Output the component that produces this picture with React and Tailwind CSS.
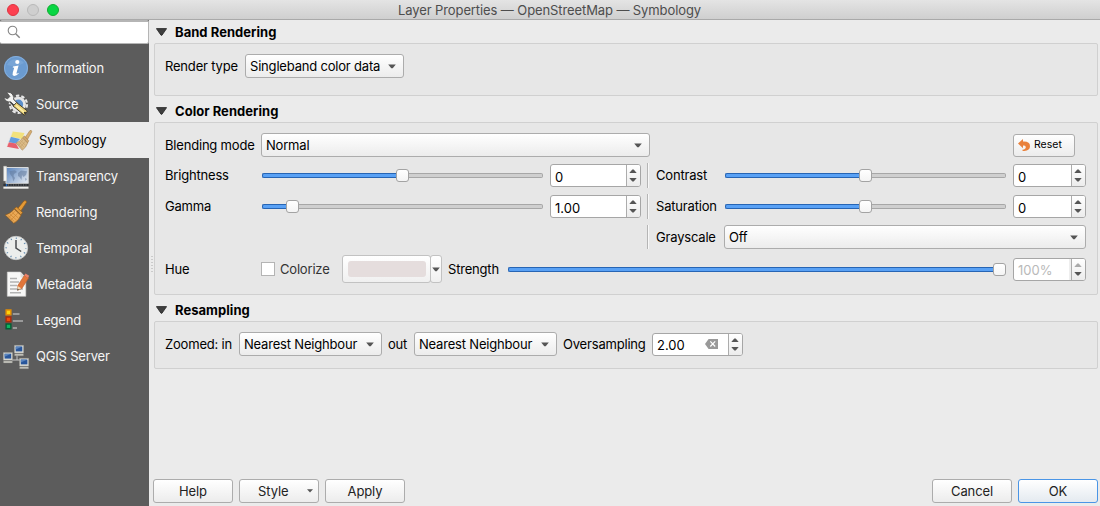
import React from "react";

const Info = () => (
  <svg width="28" height="28" viewBox="0 0 28 28">
    <circle cx="13" cy="14" r="12" fill="#6b9bd0" />
    <circle cx="13" cy="14" r="11.5" fill="none" stroke="#85aedb" />
    <path d="M4 11 A10 10 0 0 1 21 9 Q13 14 4 11" fill="#78a5d6" />
    <circle cx="14.3" cy="8" r="2.1" fill="#fff" />
    <path d="M10 12.4 L15.6 11.6 L13.5 19 Q13.2 20.3 15.4 19 L15.8 19.6 Q13 22.3 10.6 21.8 Q9 21.3 9.8 18.6 L11.2 13.8 L9.7 13.4 Z" fill="#fff" />
  </svg>
);

const Source = () => (
  <svg width="28" height="28" viewBox="0 0 28 28">
    <g transform="translate(-0.9 1)">
      <circle cx="16.3" cy="13.3" r="8.6" fill="none" stroke="#e6e6e6" strokeWidth="2.2" strokeDasharray="3.4 2" />
      <circle cx="16.3" cy="13.3" r="6.2" fill="#5c8fca" stroke="#e6e6e6" strokeWidth="2.8" />
      <path d="M9.5 9.5 L14 14.5" stroke="#3c3c3c" strokeWidth="5.4" />
      <path d="M4.5 1.2 Q9.5 .8 11 4.5 Q12 7 11.4 8.2 L15 12 L12.5 14.5 L8.6 10.8 Q3.5 11.5 1.5 6.2 L5.5 7.8 L7.8 5.4 Z" fill="#f3f3f1" stroke="#4a4a4a" strokeWidth=".8" />
      <path d="M11 15 L14.5 11.6 L25.3 20 L22.3 24.3 Z" fill="#edd47b" stroke="#403b2c" strokeWidth="1" />
      <path d="M14 14.5 L22.5 21.6" stroke="#fff0a8" strokeWidth="1.4" />
      <circle cx="22.8" cy="21.8" r="1.1" fill="#39362f" />
    </g>
  </svg>
);

const Brush = ({ pale }) => (
  <g stroke={pale ? "#a27d48" : "#8f5a17"} strokeWidth=".7" strokeLinejoin="round">
    <path d="M15.5 9.8 L22.5 1.7 Q25 .5 25.4 3 L18.8 12.4 Z" fill={pale ? "#d8ae70" : "#e59a35"} />
    <path d="M12.3 9.5 L14.6 7.9 L21 13.4 L19.2 16 Z" fill={pale ? "#d3a96c" : "#e09a3d"} />
    <path d="M12 10 L19.3 16.2 Q17 21.5 11.6 24.4 L2.5 16 Q9 14.3 12 10 Z" fill={pale ? "#dcbc88" : "#eaa957"} />
    <path d="M5 16.2 L12.3 22.6 M7.5 15.2 L14.5 21 M10 13.5 L16.5 19 M8.5 21 L16 14 M6 18.8 L13 12" fill="none" stroke={pale ? "#bd985f" : "#c47c27"} strokeWidth=".6" />
  </g>
);

const Symbology = () => (
  <svg width="28" height="28" viewBox="0 0 28 28">
    <g transform="translate(0 3)">
      <path d="M6.5 2.5 L18.5 4 L16 10 L4.5 7.8 Z" fill="#f2e17c" />
      <path d="M4.5 7.8 L14 10 L10 14.5 L2.5 13.3 Z" fill="#619de0" />
      <path d="M2.5 13.3 L10 14.5 L13 20 L.8 17.8 Z" fill="#e7606d" />
      <path d="M6.5 2.5 L.8 17.8" fill="none" stroke="#ece9e4" strokeWidth=".7" />
    </g>
    <g transform="translate(8.3 3.2) scale(.69 .86)"><Brush pale /></g>
  </svg>
);

const Rendering = () => (
  <svg width="28" height="28" viewBox="0 0 28 28">
    <g transform="translate(0 1.2) scale(.93 .99)"><Brush /></g>
  </svg>
);

const Transparency = () => (
  <svg width="28" height="28" viewBox="0 0 28 28">
    <defs>
      <linearGradient id="map" x1="0" x2="1" y1="0" y2=".8">
        <stop offset="0" stopColor="#5682bd" /><stop offset="1" stopColor="#dce3ed" />
      </linearGradient>
    </defs>
    <g transform="translate(0 2)">
      <path d="M3 3.5 H25.2 V19.5 H3 Z" fill="url(#map)" stroke="#d7dadc" strokeWidth="1" />
      <path d="M6.5 7 L12 6.2 L14 8 L11 10 L10.5 12 L12 14 L10.4 17.5 L9.2 13 L7 10 Z M15 9 L18 6.5 L24 7.2 L23 11 L20.5 13 L19 11 L18.5 16 L16.5 13 L15 12 Z M22 14 L24 15 L22.5 17 Z" fill="#60799a" opacity=".55" />
      <path d="M.6 2.2 H3.6 V17 H.6 Z" fill="#f2f2ef" stroke="#b9b9b7" strokeWidth=".4" />
      <path d="M.4 19.8 H25.5 V22.4 H.4 Z" fill="#303337" />
      <path d="M5 21 H25" stroke="#747a80" strokeDasharray="1 1.5" />
      <path d="M2.8 20 H4.3 V22.5 H2.8 Z" fill="#2166bc" />
      <path d="M.4 22.6 H25.5 V24.7 H.4 Z" fill="#eeeeec" />
    </g>
  </svg>
);

const Temporal = () => (
  <svg width="28" height="28" viewBox="0 0 28 28">
    <circle cx="13" cy="14" r="11.7" fill="#eceeec" stroke="#c9cccb" strokeWidth=".8" />
    <circle cx="13" cy="14" r="9.8" fill="none" stroke="#5c87ad" strokeWidth="1.6" strokeDasharray="1 4.13" strokeDashoffset=".5" />
    <path d="M13 6 V14 L18.2 17.5" fill="none" stroke="#4b4e50" strokeWidth="1.5" />
  </svg>
);

const Metadata = () => (
  <svg width="28" height="28" viewBox="0 0 28 28">
    <path d="M4.3 2 H17.5 L22.8 8 V26.3 H4.3 Z" fill="#f8f8f7" stroke="#cfcfcd" strokeWidth=".6" />
    <path d="M17.5 2 V7.5 H22.8" fill="#dededc" />
    <path d="M7 8.5 H14 M7 12 H16 M7 15.5 H14 M7 19 H20 M7 22.8 H18" stroke="#b3b3b3" strokeWidth="1.4" />
    <path d="M21.3 5.4 L25.6 8 L18.8 18.5 L14.8 20.2 L14.7 15.8 Z" fill="#e2763a" stroke="#b85a28" strokeWidth=".6" />
    <path d="M22.5 3.4 L26.2 5.7 L25 8 L21.2 5.6 Z" fill="#e9826a" />
    <path d="M14.7 16 L18.2 18.2 L14.4 20.5 Z" fill="#ead8b7" />
    <path d="M14.6 18.8 L16 19.6 L14.2 20.8 Z" fill="#333" />
  </svg>
);

const Legend = () => (
  <svg width="28" height="28" viewBox="0 0 28 28">
    <path d="M3.1 4 H7.9 V8.7 H3.1 Z" fill="#fcd40c" stroke="#e58d04" strokeWidth="1.4" />
    <path d="M3.1 11 H7.9 V15.7 H3.1 Z" fill="#ef4908" stroke="#aa2a0b" strokeWidth="1.4" />
    <path d="M3.1 18 H7.9 V22.7 H3.1 Z" fill="#0cb660" stroke="#075c35" strokeWidth="1.4" />
    <path d="M9.8 8 H16.5 M9.8 15 H20 M9.8 22 H14" stroke="#9a9a9a" strokeWidth="2" />
  </svg>
);

const Pc = ({ x, y }) => (
  <g transform={`translate(${x} ${y})`}>
    <path d="M0 0 H9 V7.6 H0 Z" fill="#deded7" stroke="#a5a59f" strokeWidth=".5" />
    <path d="M1.2 1.2 H7.8 V6 H1.2 Z" fill="#28569b" />
    <path d="M1.2 1.2 H7.8 L1.2 4.2 Z" fill="#5a84bd" />
    <path d="M0 8.4 H9 V10.4 H0 Z" fill="#c9c9c0" stroke="#777" strokeWidth=".4" />
  </g>
);

const Server = () => (
  <svg width="28" height="28" viewBox="0 0 28 28">
    <path d="M14 13 V18 M9 18 H19" stroke="#c7c7c7" />
    <Pc x={11.5} y={3.4} />
    <Pc x={.4} y={10.6} />
    <Pc x={16.6} y={16.4} />
  </svg>
);

const NAV = [
  ["Information", Info],
  ["Source", Source],
  ["Symbology", Symbology],
  ["Transparency", Transparency],
  ["Rendering", Rendering],
  ["Temporal", Temporal],
  ["Metadata", Metadata],
  ["Legend", Legend],
  ["QGIS Server", Server],
];

const FACE = "bg-linear-to-b from-white to-[#ececec] border border-[#acacac]";

const Down = ({ className = "" }) => (
  <svg width="8" height="5" viewBox="0 0 8 5" className={"shrink-0 " + className}>
    <path d="M.2 .4 H7.8 L4.7 4.2 H3.3 Z" fill="#555" />
  </svg>
);

const Combo = ({ w, children }) => (
  <div className={`flex h-6 shrink-0 items-center justify-between rounded-[3px] pl-1 pr-[7px] ${FACE} ${w}`}>
    <span>{children}</span>
    <Down />
  </div>
);

const Spin = ({ w, value, disabled, clear }) => (
  <div className={`flex h-[23px] shrink-0 overflow-hidden rounded-[3px] border border-[#a6a6a6] bg-white tracking-normal ${w}`}>
    <div className={"flex min-w-0 flex-1 items-center justify-between pl-1 pr-[10px] pt-0.5 " + (disabled ? "text-[#b9b9b9] border-r-2 border-[#eeeeee]" : "")}>
      <span>{value}</span>
      {clear && (
        <svg width="13" height="10" viewBox="0 0 13 10" className="-mt-[3px]">
          <path d="M3.6 0 H13 V10 H3.6 L0 5 Z" fill="#999" />
          <path d="M5.3 2.3 L10.2 7.5 M10.2 2.3 L5.3 7.5" stroke="#fff" strokeWidth="1.2" />
        </svg>
      )}
    </div>
    <div className="flex w-[14px] items-center justify-center border-l border-[#acacac] bg-linear-to-b from-white to-[#ececec] pr-px">
      <svg width="8" height="13" viewBox="0 0 8 13">
        <path d="M.3 4 L3.3 .4 H4.7 L7.7 4 Z" fill={disabled ? "#aaa" : "#555"} />
        <path d="M.3 9 H7.7 L4.7 12.6 H3.3 Z" fill="#555" />
      </svg>
    </div>
  </div>
);

const Slider = ({ w, fill }) => (
  <div className={`flex h-[13px] shrink-0 items-center ${w}`}>
    <div className={`h-[5px] shrink-0 rounded-l-[2px] border border-r-0 border-[#2765b4] bg-[#59a1f5] ${fill}`} />
    <div className="h-[13px] w-[13px] shrink-0 rounded-[3px] border border-[#a3a3a3] bg-linear-to-b from-white to-[#f4f4f4]" />
    <div className="h-[5px] min-w-0 flex-1 rounded-r-[2px] border border-l-0 border-[#a7a7a7] bg-[#cfcfcf]" />
  </div>
);

const FullSlider = () => (
  <div className="flex h-[13px] w-[498px] shrink-0 items-center">
    <div className="h-[5px] flex-1 rounded-l-[2px] border border-r-0 border-[#2765b4] bg-[#59a1f5]" />
    <div className="h-[13px] w-[13px] rounded-[3px] border border-[#a3a3a3] bg-linear-to-b from-white to-[#f4f4f4]" />
  </div>
);

const Divider = () => (
  <div className="ml-1.5 mr-[7px] w-0.5 shrink-0 self-stretch border-l border-[#b5b5b5] bg-[#f8f8f8]" />
);

const Group = ({ title, head, box, children }) => (
  <section>
    <div className={`flex items-end ${head}`}>
      <div className="flex h-[22px] items-center pl-0.5">
        <svg width="11" height="8" viewBox="0 0 11 8">
          <path d="M.4 .6 H10.6 L6 7.2 H5 Z" fill="#3f3f3f" stroke="#222" strokeWidth=".8" />
        </svg>
        <h2 className="pl-2 text-[13px] leading-5 font-bold tracking-[0.04px]">{title}</h2>
      </div>
    </div>
    <div className={`rounded-[2px] border border-[#d0d0d0] bg-[#e7e7e7] pl-[10px] ${box}`}>{children}</div>
  </section>
);

const Button = ({ children, className = "" }) => (
  <div className={`flex h-6 w-20 items-center justify-center rounded-[3px] tracking-[-0.1px] text-[#222] ${className || FACE}`}>{children}</div>
);

export default function App() {
  return (
    <div className="flex h-[506px] w-[1100px] flex-col overflow-hidden bg-[#ebebeb] font-['Inter',sans-serif] text-[13px] leading-5 tracking-[-0.19px] whitespace-nowrap text-black">
      <header className="flex h-5 shrink-0 items-center border-b border-[#a9a9a9] bg-linear-to-b from-[#e4e4e4] to-[#cfcfcf] pl-[7px]">
        <div className="flex gap-2">
          <i className="h-3 w-3 rounded-full border border-[#dd3440] bg-[#fd4050]" />
          <i className="h-3 w-3 rounded-full border border-[#b9b9b9] bg-[#cfcfcf]" />
          <i className="h-3 w-3 rounded-full border border-[#11ac30] bg-[#08d644]" />
        </div>
        <h1 className="flex-1 pr-[60px] text-center tracking-[-0.1px] text-[#4d4d4d]">Layer Properties — OpenStreetMap — Symbology</h1>
      </header>
      <div className="flex min-h-0 flex-1">
        <nav className="w-[149px] shrink-0 bg-[#5c5c5c] text-[#f5f5f5]">
          <div className="mb-1.5 flex h-6 w-[149px] items-center rounded-[2px] border border-t-2 border-l-0 border-[#b5b5b5] bg-white pb-px pl-[7px]">
            <svg width="14" height="14" viewBox="0 0 14 14">
              <circle cx="5.5" cy="5.5" r="4.3" fill="none" stroke="#858585" strokeWidth="1.1" />
              <path d="M8.7 8.7 L12.7 12.7" stroke="#858585" strokeWidth="1.4" />
            </svg>
          </div>
          {NAV.map(([name, Icon]) => (
            <div key={name} className={"flex h-9 items-center " + (name === "Symbology" ? "bg-[#ebebeb] pl-1.5 text-black" : "pl-[3px]")}>
              <Icon />
              <span className="pl-[5px]">{name}</span>
            </div>
          ))}
        </nav>
        <main className="relative flex min-w-0 flex-1 flex-col pr-[2px] pl-[5px]">
          <svg width="2" height="18" className="absolute top-[236px] left-[2px]">
            <path d="M1 0 V18" stroke="#aaa" strokeWidth="1" strokeDasharray="1 2" />
          </svg>
          <Group title="Band Rendering" head="h-[23px]" box="h-[53px] pt-[10px]">
            <div className="flex items-center">
              <span className="w-20">Render type</span>
              <Combo w="w-[159px]">Singleband color data</Combo>
            </div>
          </Group>
          <Group title="Color Rendering" head="h-[26px]" box="flex h-[173px] flex-col gap-1.5 pt-[10px]">
            <div className="flex h-6 items-center">
              <span className="w-24">Blending mode</span>
              <Combo w="w-[389px]">Normal</Combo>
              <div className={`mr-[22px] ml-auto flex h-[23px] w-[62px] items-center gap-1 rounded-[3px] pl-1 text-[10.5px] tracking-normal ${FACE}`}>
                <svg width="12" height="12" viewBox="0 0 12 12" className="-mt-px">
                  <path d="M0 4.5 L5 0 V2.6 Q12 2.2 12 7.2 Q12 11.5 6.3 12 Q3.8 12 4.5 10.8 Q8 10.3 7.8 8 Q7.6 6.5 5 6.6 V9.2 Z" fill="#e9813c" />
                </svg>
                <span>Reset</span>
              </div>
            </div>
            <div className="flex h-[25px] items-center">
              <span className="w-[97px] pb-px">Brightness</span>
              <Slider w="w-[281px]" fill="w-[134px]" />
              <div className="w-[7px]" />
              <Spin w="w-[91px]" value="0" />
              <Divider />
              <span className="w-[69px] pb-px">Contrast</span>
              <Slider w="w-[281px]" fill="w-[134px]" />
              <div className="w-[7px]" />
              <Spin w="w-[73px]" value="0" />
            </div>
            <div className="flex h-[25px] items-center">
              <span className="w-[97px] pb-px">Gamma</span>
              <Slider w="w-[281px]" fill="w-[24px]" />
              <div className="w-[7px]" />
              <Spin w="w-[91px]" value="1.00" />
              <Divider />
              <span className="w-[69px] pb-px">Saturation</span>
              <Slider w="w-[281px]" fill="w-[134px]" />
              <div className="w-[7px]" />
              <Spin w="w-[73px]" value="0" />
            </div>
            <div className="flex h-6 items-center">
              <div className="w-[476px]" />
              <Divider />
              <span className="w-[68px]">Grayscale</span>
              <Combo w="w-[362px]">Off</Combo>
            </div>
            <div className="flex h-7 items-center">
              <span className="w-24">Hue</span>
              <div className="h-[14px] w-[14px] border border-[#b4b4b4] bg-white" />
              <span className="w-[67px] pl-[5px] text-[#333]">Colorize</span>
              <div className="flex h-7 w-[89px] items-center justify-center rounded-[3px] border border-[#c2c2c2] bg-linear-to-b from-white to-[#f0f0f0]">
                <div className="h-4 w-[78px] rounded-[3px] bg-[#e5dddd]" />
              </div>
              <div className="-ml-px flex h-7 w-3 items-center justify-center rounded-[3px] border border-[#c2c2c2] bg-linear-to-b from-white to-[#f0f0f0]"><Down /></div>
              <span className="w-[66px] pl-1.5">Strength</span>
              <FullSlider />
              <div className="w-[7px]" />
              <Spin w="w-[73px]" value="100%" disabled />
            </div>
          </Group>
          <Group title="Resampling" head="h-[26px]" box="h-[48px] pt-[10px]">
            <div className="flex items-center">
              <span className="w-[74px]">Zoomed: in</span>
              <Combo w="w-[143px]">Nearest Neighbour</Combo>
              <span className="w-8 pl-1.5">out</span>
              <Combo w="w-[143px]">Nearest Neighbour</Combo>
              <span className="w-[95px] pl-1.5">Oversampling</span>
              <Spin w="w-[91px]" value="2.00" clear />
            </div>
          </Group>
          <footer className="mt-auto mb-[3px] -ml-px flex gap-1.5">
            <Button>Help</Button>
            <div className={`flex h-6 w-20 items-center rounded-[3px] pr-[5px] pl-[18px] tracking-[-0.1px] text-[#222] ${FACE}`}>
              <span className="flex-1">Style</span>
              <svg width="6" height="4" viewBox="0 0 6 4"><path d="M0 .3 H6 L3 3.6 Z" fill="#555" /></svg>
            </div>
            <Button>Apply</Button>
            <div className="flex-1" />
            <Button>Cancel</Button>
            <Button className="border border-[#4a95e6] bg-linear-to-b from-white to-[#e4eaf0]">OK</Button>
          </footer>
        </main>
      </div>
    </div>
  );
}
